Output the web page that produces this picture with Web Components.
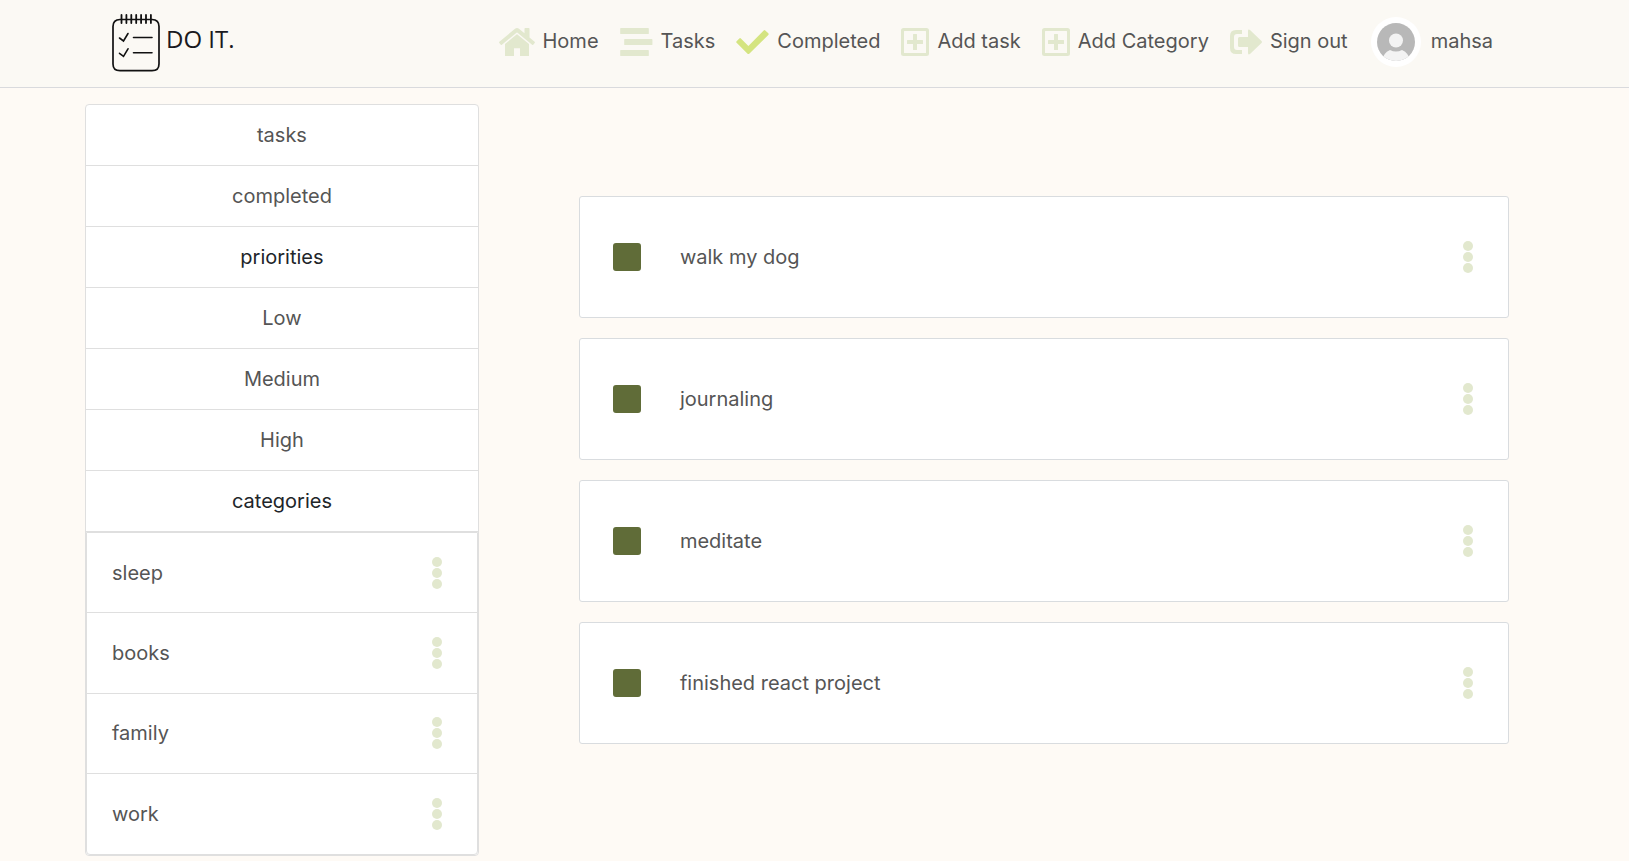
<!DOCTYPE html>
<html lang="en">
<head>
<meta charset="utf-8">
<meta name="viewport" content="width=device-width, initial-scale=1">
<title>DO IT.</title>
<style>
  body {
    margin: 0;
    background: #fefaf5;
    color: #555;
    font: 20px/28px Inter, "Open Sans", sans-serif;
    --accent: #606c38;
    --pale: #e2e8ce;
    --line: #dfdfdf;
  }
</style>
</head>
<body>
<todo-app></todo-app>

<script>
const define = (name, html, setup) => {
  const template = document.createElement('template');
  template.innerHTML = '<style>*{box-sizing:border-box}a{color:inherit;text-decoration:none}</style>' + html;
  customElements.define(name, class extends HTMLElement {
    connectedCallback() {
      if (this.shadowRoot) return;
      this.attachShadow({ mode: 'open' }).append(template.content.cloneNode(true));
      if (setup) setup(this, this.shadowRoot);
    }
  });
};

const icons = {
  home: [36, 32, '<path d="M17.6 8.5 6 18V30h9v-7.800h6V30h9V18L18.4 8.5q-.4-.3-.8 0zM35.6 15.8 30.5 11.4V2.7q0-.7-.7-.7h-3.6q-.7 0-.7.7v4.6L20 2.7q-2-1.6-4 0L.4 15.8q-.6.5-.1 1.1l1.5 1.8q.5.6 1.1.1L17.5 6.7q.5-.4 1 0l14.6 12.1q.6.5 1.1-.1l1.5-1.8q.5-.6-.1-1.1z"/>'],
  stream: [33, 32, '<path d="M.8 2h27.4q.6 0 .6.6v4.8q0 .6-.6.6H.8Q.2 8 .2 7.4V2.6Q.2 2 .8 2zM4.8 13h27q.6 0 .6.6v4.8q0 .6-.6.6h-27q-.6 0-.6-.6v-4.8q0-.6.6-.6zM.8 24h27.4q.6 0 .6.6v4.8q0 .6-.6.6H.8q-.6 0-.6-.6v-4.8q0-.6.6-.6z"/>'],
  check: [33, 32, '<path fill="#d4e480" d="M11.3 27.6.6 16.8q-.8-.8 0-1.6l2.7-2.7q.8-.8 1.6 0l7.5 7.5L27.7 4.5q.8-.8 1.6 0l3 2.8q.8.8 0 1.6L13.5 27.6q-1.1 1-2.2 0z"/>'],
  plus: [28, 32, '<path fill-rule="evenodd" d="M2.5 2h23Q28 2 28 4.5v23q0 2.5-2.5 2.5h-23Q0 30 0 27.5v-23Q0 2 2.5 2zM3 5.5v21q0 .5.5.5h21q.5 0 .5-.5v-21q0-.5-.5-.5h-21q-.5 0-.5.5zM12.5 8h3q.5 0 .5.5V14h5.5q.5 0 .5.5v3q0 .5-.5.5H16v5.5q0 .5-.5.5h-3q-.5 0-.5-.5V18H6.5q-.5 0-.5-.5v-3q0-.5.5-.5H12V8.5q0-.5.5-.5z"/>'],
  signout: [32, 32, '<path d="M12 28H6q-6 0-6-6V10q0-6 6-6h6v4H7q-3 0-3 3v10q0 3 3 3h5zM31.5 17 20 28q-2 1.3-2-1v-6H9.5Q8 21 8 19.5v-7Q8 11 9.5 11H18V5q0-2.3 2-1l11.5 11q.9 1 0 2z"/>']
};

define('app-icon', `
  <style>:host{display:block;flex:none} svg{display:block;fill:var(--pale)}</style>`,
  (el, root) => {
    const [w, h, art] = icons[el.getAttribute('name')];
    root.innerHTML += `<svg width="${w}" height="${h}" viewBox="0 0 ${w} ${h}" aria-hidden="true">${art}</svg>`;
  });

define('nav-item', `
  <style>
    :host{display:block}
    a{display:flex;align-items:center;gap:8px;white-space:nowrap;line-height:32px}
    :host([wide]) a{gap:10px}
    .label{padding-bottom:3px}
  </style>
  <a href="#"><slot name="icon"></slot><span class="label"><slot></slot></span></a>`);

define('user-avatar', `
  <style>:host{display:block;flex:none} svg{display:block}</style>
  <svg width="50" height="50" viewBox="0 0 50 50" role="img" aria-label="Profile picture">
    <circle cx="25" cy="25" r="25" fill="#fff"/>
    <clipPath id="round"><circle cx="25" cy="25" r="19"/></clipPath>
    <g clip-path="url(#round)">
      <path fill="#b8b8b8" d="M6 6h38v38H6z"/>
      <path fill="#f3f3f3" d="M11 44q1-8 8-11 6 3 12 0 7 3 8 11z"/>
      <circle cx="25" cy="23.5" r="8" fill="#b8b8b8"/>
      <circle cx="25" cy="23.5" r="7" fill="#f3f3f3"/>
    </g>
  </svg>`);

define('brand-logo', `
  <style>
    :host{display:block}
    a{display:flex;align-items:center;gap:6px;padding-top:1px;color:#1a1a1e;font:24px/32px "Open Sans",sans-serif}
    svg{display:block}
    span{padding-bottom:7px}
  </style>
  <a href="#">
    <svg width="48" height="58" viewBox="0 0 48 58" fill="none" stroke="#111" stroke-linecap="round" aria-hidden="true">
      <path stroke-width="1.7" d="M8 5.5q-7 .2-7 7V50q0 6.7 7 6.7h32q7 0 7-6.7V12.5q0-6.8-7-7M8 5.5h32"/>
      <path stroke-width="1.8" d="M9.500 1v8M14.400 1v8M19.300 1v8M24.200 1v8M29.100 1v8M34 1v8M38.900 1v8"/>
      <path stroke-width="1.6" d="M21.500 23.500H40M21.500 38.800H40M7.500 24l4 3L16 19.500M7.500 39.300l4 3L16 34.800"/>
    </svg>
    <span>DO IT.</span>
  </a>`);

define('app-header', `
  <style>
    :host{display:block;background:#fbf9f4;border-bottom:1px solid #d9dadd}
    header{display:flex;align-items:center;justify-content:space-between;max-width:1459px;margin:0 auto;padding:0 51px 3px 27px;min-height:87px}
    nav{display:flex;align-items:center;gap:21px}
    nav-item:last-child{margin-left:2px}
  </style>
  <header>
    <brand-logo></brand-logo>
    <nav aria-label="Main">
      <nav-item><app-icon slot="icon" name="home"></app-icon>Home</nav-item>
      <nav-item><app-icon slot="icon" name="stream"></app-icon>Tasks</nav-item>
      <nav-item><app-icon slot="icon" name="check"></app-icon>Completed</nav-item>
      <nav-item><app-icon slot="icon" name="plus"></app-icon>Add task</nav-item>
      <nav-item><app-icon slot="icon" name="plus"></app-icon>Add Category</nav-item>
      <nav-item><app-icon slot="icon" name="signout"></app-icon>Sign out</nav-item>
      <nav-item wide><user-avatar slot="icon"></user-avatar>mahsa</nav-item>
    </nav>
  </header>`);

define('more-button', `
  <style>
    :host{display:block}
    button{display:block;border:0;padding:0;background:none;cursor:pointer}
    svg{display:block;fill:var(--pale)}
  </style>
  <button type="button" aria-label="Options">
    <svg width="10" height="32" viewBox="0 0 10 32"><circle cx="5" cy="5" r="5"/><circle cx="5" cy="16" r="5"/><circle cx="5" cy="27" r="5"/></svg>
  </button>`);

define('side-link', `
  <style>
    :host{display:block;border-bottom:1px solid var(--line);text-align:center}
    a{display:block;padding:16px}
  </style>
  <a href="#"><slot></slot></a>`);

define('side-heading', `
  <style>
    :host{display:block;border-bottom:1px solid var(--line);text-align:center}
    h2{margin:0;padding:16px;font:inherit;color:#212529}
  </style>
  <h2><slot></slot></h2>`);

define('category-row', `
  <style>
    :host{display:flex;align-items:center;justify-content:space-between;padding:0 35px 0 25px;border-bottom:1px solid var(--line)}
    :host(:last-child){border-bottom:0}
  </style>
  <a href="#"><slot></slot></a><more-button></more-button>`);

define('side-menu', `
  <style>
    :host{display:block;background:#fff;border:1px solid var(--line);border-radius:4px}
    .categories{display:grid;grid-auto-rows:1fr;min-height:323px;border:1px solid var(--line);border-radius:0 0 4px 4px}
  </style>
  <side-link>tasks</side-link>
  <side-link>completed</side-link>
  <side-heading>priorities</side-heading>
  <side-link>Low</side-link>
  <side-link>Medium</side-link>
  <side-link>High</side-link>
  <side-heading>categories</side-heading>
  <div class="categories">
    <category-row>sleep</category-row>
    <category-row>books</category-row>
    <category-row>family</category-row>
    <category-row>work</category-row>
  </div>`);

define('task-card', `
  <style>
    :host{display:flex;align-items:center;justify-content:space-between;min-height:122px;padding:0 35px 0 33px;background:#fff;border:1px solid #d9dcdf;border-radius:3px}
    label{display:flex;align-items:center;gap:39px}
    input{appearance:none;flex:none;width:28px;height:28px;margin:0;border-radius:3px;border:2px solid var(--accent)}
    input:checked{background:var(--accent)}
  </style>
  <label><input type="checkbox" checked><span><slot></slot></span></label><more-button></more-button>`);

define('todo-app', `
  <style>
    :host{display:block}
    .page{display:flex;align-items:flex-start;gap:100px;max-width:1459px;margin:0 auto;padding:16px 0 5px}
    side-menu{flex:0 0 27%}
    main{flex:1;display:grid;gap:20px;padding:92px 35px 0 0}
  </style>
  <app-header></app-header>
  <div class="page">
    <side-menu></side-menu>
    <main>
      <task-card>walk my dog</task-card>
      <task-card>journaling</task-card>
      <task-card>meditate</task-card>
      <task-card>finished react project</task-card>
    </main>
  </div>`);
</script>
</body>
</html>
